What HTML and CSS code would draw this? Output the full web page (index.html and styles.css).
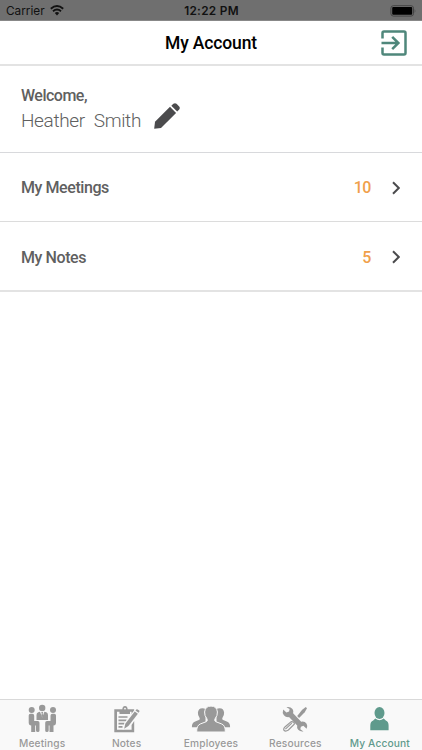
FILE: index.html
```html
<!DOCTYPE html>
<html lang="en">
  <head>
    <meta charset="utf-8">
    <meta name="viewport" content="width=device-width, initial-scale=1">
    <title>My Account</title>
    <link rel="stylesheet" href="styles.css">
  </head>
  <body>
    <div class="status-bar">
      <div class="carrier">
        <span>Carrier</span>
        <svg class="wifi" viewBox="0 0 14 11" width="14" height="11">
          <path d="M0.8 3.7Q7-1.7 13.2 3.7M3 6.3Q7 2.8 11 6.3" fill="none" stroke="#111" stroke-width="1.9"/>
          <path d="M4.8 8Q7 6.2 9.2 8L7 10.4z" fill="#111"/>
        </svg>
      </div>
      <span class="time">12:22 PM</span>
      <svg class="battery" viewBox="0 0 27 12" width="27" height="12">
        <rect x="0.9" y="0.7" width="22.6" height="10.4" rx="2.5" fill="none" stroke="#444"/>
        <rect x="2.2" y="2" width="20" height="7.8" rx="1" fill="#000"/>
        <path d="M24.7 4q1.5 2 0 4z" fill="#444"/>
      </svg>
    </div>

    <header class="header">
      <h1>My Account</h1>
      <a class="logout" href="#" aria-label="Log out">
        <svg viewBox="0 0 26 26" width="26" height="26" fill="none" stroke="#4f877b" stroke-width="2.5">
          <path d="M1.5 8.5V3q0-1.5 1.5-1.5h20q1.5 0 1.5 1.5v20q0 1.5-1.5 1.5H3q-1.5 0-1.5-1.5v-5.5"/>
          <path d="M0.5 13H17M11.2 6.8L17.4 13L11.2 19.2"/>
        </svg>
      </a>
    </header>

    <main>
      <section class="welcome">
        <div>
          <p class="greeting">Welcome,</p>
          <p class="name"><span>Heather</span><span>Smith</span></p>
        </div>
        <svg class="pencil" viewBox="0 0 26 26" width="26" height="26" fill="#4b4b4d">
          <path d="M0.2 25.8L1 18.8L16 3.8L22.1 9.9L7 25z"/>
          <path d="M17.3 2.7L19.4 0.8Q21-0.3 22.5 0.8L25.2 3.5Q26.4 5 25.2 6.5L23.2 8.6z"/>
        </svg>
      </section>
      <a class="row" href="#">
        <span class="label">My Meetings</span>
        <span class="count">10</span>
        <svg class="chevron" viewBox="0 0 8 14" width="8" height="14"><path d="M1 1.2L6.8 7L1 12.8"/></svg>
      </a>
      <a class="row" href="#">
        <span class="label">My Notes</span>
        <span class="count">5</span>
        <svg class="chevron" viewBox="0 0 8 14" width="8" height="14"><path d="M1 1.2L6.8 7L1 12.8"/></svg>
      </a>
    </main>

    <nav class="tabs">
      <a class="tab" href="#">
        <svg viewBox="0 0 40 30" width="40" height="30">
          <circle cx="9.7" cy="6" r="3"/>
          <circle cx="20.2" cy="4" r="3.2"/>
          <circle cx="31" cy="6" r="3"/>
          <path d="M16.2 8.2L18 7.7L20.2 13.5L22.4 7.7L24.3 8.2Q26 8.9 26 11V16H14.5V11Q14.5 8.9 16.2 8.2z"/>
          <path d="M19.2 8h2l-.5 1.5 .5 2.5-1 1.5-1-1.5 .5-2.5z"/>
          <path d="M6.7 11.5Q6.7 9.8 8.4 9.8H10.3Q12.2 9.8 12.2 11.7V17H15.7Q17.5 17 17.5 18.8V26.5Q17.5 28 15.8 28T14 26.5V21.5H13.2V28H9.2V21.5Q6.7 21.3 6.7 18.5z"/>
          <path d="M34 11.5Q34 9.8 32.3 9.8H30.4Q28.5 9.8 28.5 11.7V17H25Q23.2 17 23.2 18.8V26.5Q23.2 28 24.9 28T26.7 26.5V21.5H27.5V28H31.5V21.5Q34 21.3 34 18.5z"/>
        </svg>
        <span>Meetings</span>
      </a>
      <a class="tab" href="#">
        <svg viewBox="1 0 40 30" width="40" height="30">
          <path d="M10.3 5.2H28.2V10L25.6 12.8V7.8H24V10H13.5V7.8H11V25.7H25.6V21L28.2 17V28.3H8.3V5.2z"/>
          <path d="M13.8 8.8V6H16.3Q16.3 2 19 2T21.7 6H23.6V8.8z"/>
          <circle class="hole" cx="19" cy="4.6" r="0.9"/>
          <path class="line" d="M12.5 13H21.5M12.5 16.3H20.5M12.5 19.6H18.5M12.5 22.8H16.5" stroke-width="1.7"/>
          <path class="hole" d="M16.5 25.8L18.5 19L29.5 4.6L34 8L22.5 23.2z"/>
          <path d="M18.2 24.8L19.3 19.7L28.7 7.4L31.9 9.8L22.4 22z"/>
          <path d="M29.5 6.4L30.4 5.4Q31 5 31.7 5.5L33.2 6.6Q33.8 7.2 33.3 7.8L32.6 8.8z"/>
        </svg>
        <span>Notes</span>
      </a>
      <a class="tab" href="#">
        <svg viewBox="0 0 40 30" width="40" height="30">
          <path d="M0.9 23.2Q.8 18.3 4.2 17.4L8.4 15.8Q9.2 14.8 8.4 13.5Q6.7 11.4 6.9 8.6Q7.4 4.2 11.4 4.2T16 8.6Q16 11.4 14.5 13.5V23.2z"/>
          <path d="M39.1 23.2Q39.2 18.3 35.8 17.4L31.6 15.8Q30.8 14.8 31.6 13.5Q33.3 11.4 33.1 8.6Q32.6 4.2 28.6 4.2T24 8.6Q24 11.4 25.5 13.5V23.2z"/>
          <path class="front" d="M5.7 28Q5.5 21.5 9.2 20L15.5 17.6Q17 16.5 15.8 14.5Q13.4 11.8 13.6 8Q14.2 2.1 20 2.1T26.4 8Q26.6 11.8 24.2 14.5Q23 16.5 24.5 17.6L30.8 20Q34.5 21.5 34.3 28z"/>
        </svg>
        <span>Employees</span>
      </a>
      <a class="tab" href="#">
        <svg viewBox="0 0 40 30" width="40" height="30">
          <path d="M8.2 5.5L11.4 8.6L14.1 7.6L14.6 4.9L11.4 3.2Q15.3 2.4 17.5 5.1Q18.8 6.8 18.1 9.2L26.2 17.8Q29.7 17 31.6 19.8Q33 22.1 31.6 24.8L28.4 21.8L25.9 22.7L25.3 25.3L28.5 27.4Q25.3 28 23.2 25.7Q21.6 23.8 22.2 21.6L14 13.1Q10.7 13.4 8.9 11.3Q7 8.9 8.2 5.5z"/>
          <path d="M30.8 3.1L32 4.3L29.7 8.2L24.1 14L22.2 12.1L27.2 5.7z"/>
          <path class="line" d="M16.2 17.6L10.2 22.7Q7.8 25.2 9.2 26.5T13.4 26L19.3 20.2Q19.9 17.8 16.2 17.6zM10.4 25.1L16.8 19.1" stroke-width="1.2"/>
        </svg>
        <span>Resources</span>
      </a>
      <a class="tab active" href="#">
        <svg viewBox="0 0 40 30" width="40" height="30">
          <ellipse cx="19.5" cy="9" rx="5" ry="6"/>
          <path d="M10.3 26.3V21.5Q10.3 17.5 13.2 16.4L15.3 14.6Q19.5 18 23.7 14.6L25.8 16.4Q28.6 17.5 28.6 21.5V26.3z"/>
        </svg>
        <span>My Account</span>
      </a>
    </nav>
  </body>
</html>
```

FILE: styles.css
```css
* {
  box-sizing: border-box;
}
body {
  margin: 0;
  height: 750px;
  display: flex;
  flex-direction: column;
  font-family: Roboto, sans-serif;
  background-color: #fff;
  color: #606060;
  overflow: hidden;
}
a {
  color: inherit;
  text-decoration: none;
}
h1,
p {
  margin: 0;
}
svg {
  display: block;
  flex-shrink: 0;
}

/* status bar */
.status-bar {
  display: grid;
  grid-template-columns: 1fr auto 1fr;
  align-items: center;
  height: 21px;
  padding: 1px 5px 0 6px;
  background-color: #6f6f6f;
  border-bottom: 1px solid #888;
  font-family: Inter, sans-serif;
  font-size: 11.8px;
  color: #111;
}
.carrier {
  display: flex;
  align-items: center;
  gap: 5px;
}
.time {
  font-weight: 600;
  letter-spacing: 0.3px;
}
.battery {
  justify-self: end;
}

/* header */
.header {
  display: grid;
  grid-template-columns: 1fr auto 1fr;
  align-items: center;
  height: 45px;
  padding: 0 15px;
  border-bottom: 2px solid #e3e3e3;
}
.header h1 {
  grid-column: 2;
  font-size: 17.5px;
  font-weight: 500;
  letter-spacing: -0.15px;
  color: #000;
}
.logout {
  justify-self: end;
}

/* account */
.welcome {
  display: flex;
  gap: 13px;
  height: 87px;
  padding: 19px 21px 0;
  border-bottom: 1px solid #d8d9dc;
}
.greeting {
  font-size: 16px;
  font-weight: 500;
  line-height: 22px;
  letter-spacing: -0.5px;
}
.name {
  display: flex;
  gap: 9px;
  font-size: 19px;
  font-weight: 300;
  line-height: 28px;
  letter-spacing: -0.35px;
}
.pencil {
  margin-top: 18px;
}
.row {
  display: flex;
  align-items: center;
  height: 69px;
  padding: 1px 22px 0 21px;
  border-bottom: 1px solid #dcdcdc;
  font-size: 16px;
  font-weight: 500;
  letter-spacing: -0.42px;
}
.row:last-child {
  height: 70px;
  padding-top: 2px;
  border-bottom: 2px solid #e3e3e3;
}
.label {
  flex: 1;
}
.count {
  color: #f0a04b;
}
.chevron {
  margin-left: 21px;
  fill: none;
  stroke: #4b4b4d;
  stroke-width: 2;
}

/* bottom tabs */
.tabs {
  display: flex;
  height: 51px;
  margin-top: auto;
  background-color: #f9f9f9;
  border-top: 1px solid #d9d9d9;
}
.tab {
  flex: 1 1 0;
  min-width: 0;
  display: flex;
  flex-direction: column;
  align-items: center;
  padding-top: 4px;
  font-family: Inter, sans-serif;
  font-size: 10.2px;
  font-weight: 500;
  line-height: 18px;
  letter-spacing: 0.15px;
  white-space: nowrap;
  color: #999;
  fill: currentColor;
}
.tab.active {
  color: #5f9a8c;
}
.tab .line {
  fill: none;
  stroke: currentColor;
}
.tab .hole {
  fill: #f9f9f9;
}
.tab .front {
  stroke: #f9f9f9;
  stroke-width: 1;
}
```
